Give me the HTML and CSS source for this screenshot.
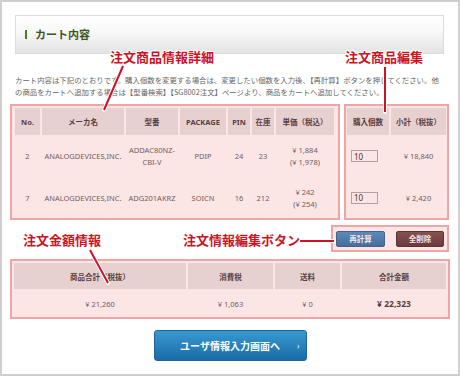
FILE: index.html
```html
<!DOCTYPE html>
<html lang="ja">
<head>
<meta charset="utf-8">
<title>カート内容</title>
<link rel="stylesheet" href="styles.css">
</head>
<body>
<div class="page">
  <div class="frame">
    <div class="title-box"><h1 class="title">カート内容</h1></div>
    <p class="desc">カート内容は下記のとおりです。購入個数を変更する場合は、変更したい個数を入力後、【再計算】ボタンを押してください。他<br>の商品をカートへ追加する場合は【型番検索】【SG8002注文】ページより、商品をカートへ追加してください。</p>

    <div class="cart">
      <div class="hl items">
        <div class="grid items-grid">
          <div class="th">No.</div>
          <div class="th jp">メーカ名</div>
          <div class="th jp">型番</div>
          <div class="th">PACKAGE</div>
          <div class="th">PIN</div>
          <div class="th jp">在庫</div>
          <div class="th jp">単価（税込）</div>

          <div class="td">2</div>
          <div class="td">ANALOGDEVICES,INC.</div>
          <div class="td"><span>ADDAC80NZ-</span><span>CBI-V</span></div>
          <div class="td">PDIP</div>
          <div class="td">24</div>
          <div class="td">23</div>
          <div class="td"><span>¥ 1,884</span><span>(¥ 1,978)</span></div>

          <div class="td">7</div>
          <div class="td">ANALOGDEVICES,INC.</div>
          <div class="td">ADG201AKRZ</div>
          <div class="td">SOICN</div>
          <div class="td">16</div>
          <div class="td">212</div>
          <div class="td"><span>¥ 242</span><span>(¥ 254)</span></div>
        </div>
      </div>

      <div class="hl edit">
        <div class="grid edit-grid">
          <div class="th jp">購入個数</div>
          <div class="th jp">小計（税抜）</div>
          <div class="td td-qty"><input class="qty" type="text" value="10"></div>
          <div class="td">¥ 18,840</div>
          <div class="td td-qty"><input class="qty" type="text" value="10"></div>
          <div class="td">¥ 2,420</div>
        </div>
      </div>
    </div>

    <div class="actions">
      <div class="hl btns">
        <button class="btn btn-recalc" type="button">再計算</button>
        <button class="btn btn-clear" type="button">全削除</button>
      </div>
    </div>

    <div class="hl summary">
      <div class="grid summary-grid">
        <div class="th jp">商品合計（税抜）</div>
        <div class="th jp">消費税</div>
        <div class="th jp">送料</div>
        <div class="th jp">合計金額</div>
        <div class="td">¥ 21,260</div>
        <div class="td">¥ 1,063</div>
        <div class="td">¥ 0</div>
        <div class="td total">¥ 22,323</div>
      </div>
    </div>

    <div class="next-wrap">
      <a class="next" href="#"><span></span><span class="next-label">ユーザ情報入力画面へ</span><span class="chev">›</span></a>
    </div>
  </div>

  <div class="notes">
    <svg class="lines" width="460" height="376" viewBox="0 0 460 376">
      <g stroke="#ffffff" stroke-width="4" stroke-linecap="round" fill="none">
        <line x1="123" y1="66" x2="104" y2="110"/>
        <line x1="385" y1="67" x2="385" y2="112"/>
        <line x1="90" y1="250" x2="108" y2="283"/>
        <line x1="300" y1="241" x2="334" y2="241"/>
      </g>
      <g stroke="#cc1326" stroke-width="2" fill="none">
        <line x1="123" y1="66" x2="104" y2="110"/>
        <line x1="385" y1="67" x2="385" y2="112"/>
        <line x1="90" y1="250" x2="108" y2="283"/>
        <line x1="300" y1="241" x2="334" y2="241"/>
      </g>
    </svg>
    <span class="note n1">注文商品情報詳細</span>
    <span class="note n2">注文商品編集</span>
    <span class="note n3">注文金額情報</span>
    <span class="note n4">注文情報編集ボタン</span>
  </div>
</div>
</body>
</html>
```

FILE: styles.css
```css
* { box-sizing: border-box; }

body {
  margin: 0;
  font-family: "Noto Sans", "Noto Sans CJK JP", sans-serif;
  background: #fff;
}

.page {
  position: relative;
  width: 460px;
  height: 376px;
}

.frame {
  width: 460px;
  height: 376px;
  border: 2px solid #cfcfcf;
  padding: 13px 8px 0;
  background: #fff;
}

.title-box {
  height: 39px;
  margin: 0 6px 0 5px;
  border: 1px solid #dcdcdc;
  background: linear-gradient(#ffffff, #f9f9f9 40%, #e3e3e3);
  display: flex;
  align-items: center;
  padding-left: 9px;
}

.title {
  margin: 0;
  display: flex;
  align-items: center;
  gap: 8px;
  font-family: "Noto Sans CJK JP", sans-serif;
  font-size: 11px;
  font-weight: bold;
  color: #3b571d;
  line-height: 1;
}

.title::before {
  content: "";
  width: 2px;
  height: 9px;
  background: #3f7f1f;
}

.desc {
  margin: 20px 0 6px;
  padding-left: 5px;
  font-family: "Noto Sans CJK JP", sans-serif;
  font-size: 7.4px;
  line-height: 12px;
  color: #666;
  white-space: nowrap;
}

.cart {
  display: flex;
  gap: 4px;
}

.hl {
  position: relative;
  border: 2px solid #f0a4a4;
}

.hl::after {
  content: "";
  position: absolute;
  inset: 0;
  background: rgba(238, 118, 118, 0.19);
  pointer-events: none;
}

.grid {
  display: grid;
  column-gap: 2px;
}

.th {
  background: #e6e6e6;
  display: flex;
  align-items: center;
  justify-content: center;
  font-size: 7.5px;
  font-weight: bold;
  color: #333;
  white-space: nowrap;
}

.th.jp {
  font-family: "Noto Sans CJK JP", sans-serif;
}

.td {
  display: flex;
  flex-direction: column;
  align-items: center;
  justify-content: center;
  font-size: 7.5px;
  line-height: 12px;
  color: #555;
  white-space: nowrap;
}

.items {
  width: 330px;
  height: 116px;
  padding: 2px 2px 0 3px;
}

.items-grid {
  grid-template-columns: 25px 82px 52px 46px 22px 22px 58px;
  grid-template-rows: 27px 42px 41px;
}

.edit {
  width: 105px;
  height: 116px;
  padding: 2px 1px 0 1px;
}

.edit-grid {
  grid-template-columns: 42px 55px;
  grid-template-rows: 27px 42px 41px;
}

.td-qty {
  align-items: flex-start;
  padding-left: 4px;
}

.qty {
  width: 27px;
  height: 12px;
  border: 1px solid #a9a9a9;
  padding: 0 2px;
  font-family: "Noto Sans", sans-serif;
  font-size: 8px;
  color: #222;
  background: #fff;
}

.actions {
  display: flex;
  justify-content: flex-end;
  margin-top: 5px;
  padding-right: 1px;
}

.btns {
  width: 118px;
  height: 27px;
  padding: 4px 3px 0 3px;
  display: flex;
  justify-content: space-between;
  align-items: flex-start;
}

.btn {
  height: 16px;
  border-radius: 2px;
  font-family: "Noto Sans CJK JP", sans-serif;
  font-size: 7.5px;
  font-weight: bold;
  color: #fff;
  padding: 0;
  line-height: 1;
}

.btn-recalc {
  width: 49px;
  border: 1px solid #1d5f8e;
  background: linear-gradient(#3b8fc8, #1f6da6);
}

.btn-clear {
  width: 48px;
  border: 1px solid #3e2424;
  background: linear-gradient(#6e4848, #4c2e2e);
}

.summary {
  margin-top: 7px;
  width: 440px;
  height: 60px;
  padding: 2px 2px 0;
}

.summary-grid {
  grid-template-columns: 172px 85px 65px 104px;
  grid-template-rows: 26px 29px;
}

.total {
  font-size: 8.5px;
  font-weight: bold;
  color: #333;
}

.next-wrap {
  display: flex;
  justify-content: center;
  margin-top: 11px;
}

.next {
  width: 153px;
  height: 31px;
  border-radius: 3px;
  border: 1px solid #1d6699;
  background: linear-gradient(#3799d2, #1b6ba5);
  display: grid;
  grid-template-columns: 1fr auto 1fr;
  align-items: center;
  padding: 0 6px;
  text-decoration: none;
  color: #fff;
}

.next-label {
  font-family: "Noto Sans CJK JP", sans-serif;
  font-size: 10px;
  font-weight: bold;
  line-height: 1;
}

.chev {
  justify-self: end;
  font-size: 8px;
  line-height: 1;
}

.notes {
  position: absolute;
  inset: 0;
  pointer-events: none;
}

.lines {
  position: absolute;
  left: 0;
  top: 0;
}

.note {
  position: absolute;
  font-family: "Noto Sans CJK JP", sans-serif;
  font-size: 13px;
  font-weight: bold;
  line-height: 13px;
  color: #cc1326;
  white-space: nowrap;
  text-shadow: 1px 0 0 #fff, -1px 0 0 #fff, 0 1px 0 #fff, 0 -1px 0 #fff, 1px 1px 0 #fff, -1px -1px 0 #fff, 1px -1px 0 #fff, -1px 1px 0 #fff;
}

.n1 { left: 110px; top: 50px; }
.n2 { left: 345px; top: 50px; }
.n3 { left: 23px; top: 233px; }
.n4 { left: 183px; top: 233px; }
```
